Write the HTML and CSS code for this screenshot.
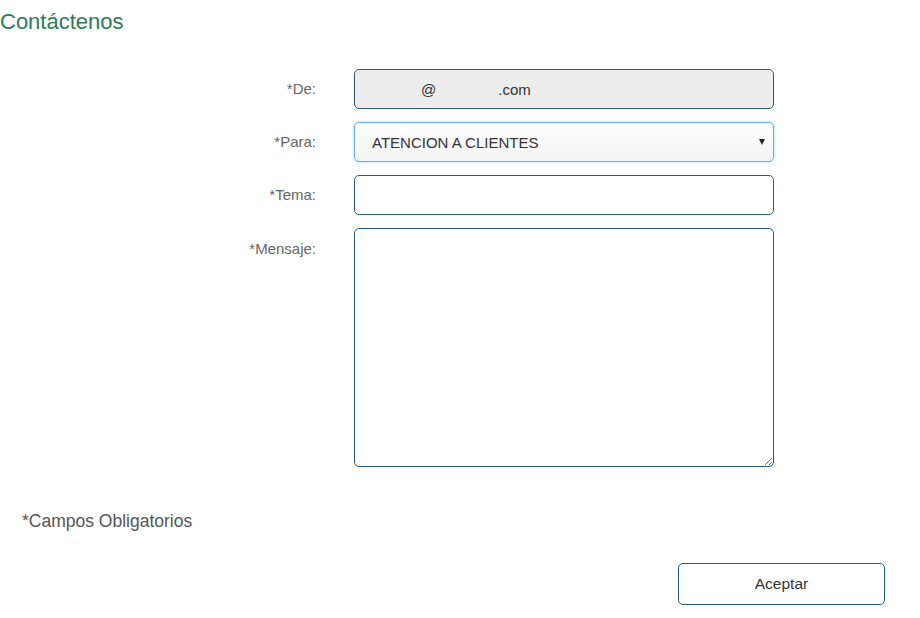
FILE: index.html
```html
<!DOCTYPE html>
<html lang="es">
<head>
<meta charset="utf-8">
<title>Contáctenos</title>
<link rel="stylesheet" href="styles.css">
</head>
<body>
<h1 class="title">Contáctenos</h1>
<form class="form">
  <label class="label">*De:</label>
  <div class="field field-readonly"><span>@</span><span class="domain">.com</span></div>
  <label class="label">*Para:</label>
  <div class="field field-select"><span>ATENCION A CLIENTES</span><span class="arrow"></span></div>
  <label class="label">*Tema:</label>
  <input class="field field-input" type="text">
  <label class="label label-top">*Mensaje:</label>
  <textarea class="field field-area"></textarea>
</form>
<p class="required">*Campos Obligatorios</p>
<div class="actions"><button class="btn" type="button">Aceptar</button></div>
</body>
</html>
```
FILE: styles.css
```css
html, body {
  margin: 0;
  padding: 0;
  background: #fff;
  font-family: "Liberation Sans", Arial, sans-serif;
}
.title {
  margin: 0;
  padding-top: 9px;
  font-size: 22px;
  line-height: 26px;
  font-weight: normal;
  color: #2f7a5a;
}
.form {
  display: grid;
  grid-template-columns: 316px 420px;
  column-gap: 38px;
  row-gap: 13px;
  margin-top: 34px;
}
.label {
  text-align: right;
  font-size: 15px;
  color: #666;
  line-height: 40px;
}
.label-top {
  line-height: 20px;
  padding-top: 11px;
}
.field {
  box-sizing: border-box;
  width: 420px;
  height: 40px;
  border: 1px solid #225b8c;
  border-radius: 5px;
  font-family: "Liberation Sans", Arial, sans-serif;
  font-size: 15px;
  color: #333;
  margin: 0;
}
.field-readonly {
  display: flex;
  align-items: center;
  background: #ededed;
  border-color: #2f5878;
  padding-left: 66px;
}
.domain {
  margin-left: 62px;
}
.field-select {
  display: flex;
  align-items: center;
  justify-content: space-between;
  padding: 0 8px 0 17px;
  background: linear-gradient(#ffffff, #f3f3f3);
  border-color: #66afe9;
  box-shadow: 0 0 3px rgba(102, 175, 233, 0.6);
}
.arrow {
  width: 0;
  height: 0;
  border-left: 3.5px solid transparent;
  border-right: 3.5px solid transparent;
  border-top: 6px solid #222;
}
.field-input {
  background: #fff;
  padding: 0 10px;
}
.field-area {
  height: 239px;
  background: #fff;
  padding: 8px 10px;
  display: block;
}
.required {
  margin: 39px 0 0 22px;
  font-size: 17.5px;
  line-height: 30px;
  color: #555;
}
.actions {
  display: flex;
  justify-content: flex-end;
  padding-right: 35px;
  margin-top: 27px;
}
.btn {
  width: 207px;
  height: 42px;
  background: #fff;
  border: 1px solid #225b8c;
  border-radius: 5px;
  font-family: "Liberation Sans", Arial, sans-serif;
  font-size: 15.5px;
  color: #333;
  cursor: pointer;
}
```
